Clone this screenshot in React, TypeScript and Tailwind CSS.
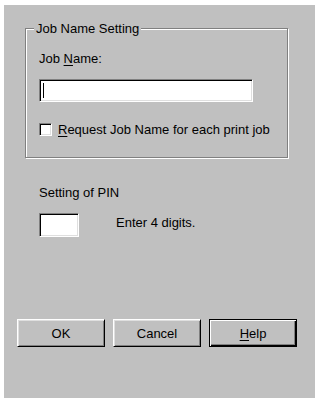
import React from 'react'

const font = { fontFamily: '"Liberation Sans", Arial, sans-serif' }

function Button({ label, underline, isDefault }: { label: string; underline?: number; isDefault?: boolean }) {
  const text =
    underline === undefined ? (
      label
    ) : (
      <>
        {label.slice(0, underline)}
        <u className="underline underline-offset-2">{label[underline]}</u>
        {label.slice(underline + 1)}
      </>
    )
  return (
    <button
      className={
        isDefault
          ? 'w-[88px] h-[28px] bg-[#c0c0c0] border border-black shadow-[inset_1px_1px_0_#fff,inset_-1px_-1px_0_#000,inset_-2px_-2px_0_#808080] text-[13px] text-black'
          : 'w-[88px] h-[28px] bg-[#c0c0c0] border border-t-white border-l-white border-b-black border-r-black shadow-[inset_1px_1px_0_#dfdfdf,inset_-1px_-1px_0_#808080] text-[13px] text-black'
      }
    >
      {text}
    </button>
  )
}

export default function App() {
  return (
    <div className="w-[318px] h-[398px] bg-white pl-[4px] pt-[5px] pr-[3px] flex" style={font}>
      <div className="flex-1 bg-[#c0c0c0] flex flex-col text-[13px] leading-[15px] text-black">
        {/* Job Name Setting group */}
        <div className="relative mt-[23px] ml-[21px] w-[263px] h-[130px] border border-[#808080] shadow-[inset_1px_1px_0_#fff,1px_1px_0_#fff] pl-[13px] pt-[22px]">
          <span className="absolute left-[8px] top-[-8px] bg-[#c0c0c0] px-[2px]">Job Name Setting</span>
          <div>
            Job <u className="underline underline-offset-2">N</u>ame:
          </div>
          <div className="mt-[13px] w-[214px] h-[23px] bg-white border border-t-[#808080] border-l-[#808080] border-b-white border-r-white shadow-[inset_1px_1px_0_#000,inset_-1px_-1px_0_#dfdfdf] pl-[3px] pt-[3px]">
            <div className="w-px h-[15px] bg-black" />
          </div>
          <label className="mt-[20px] flex items-center gap-[6px]">
            <span className="w-[13px] h-[13px] bg-white border border-t-[#808080] border-l-[#808080] border-b-white border-r-white shadow-[inset_1px_1px_0_#000,inset_-1px_-1px_0_#dfdfdf]" />
            <span>
              <u className="underline underline-offset-2">R</u>equest Job Name for each print job
            </span>
          </label>
        </div>

        {/* PIN */}
        <div className="mt-[27px] ml-[35px]">Setting of PIN</div>
        <div className="mt-[13px] ml-[35px] flex items-start gap-[37px]">
          <div className="w-[40px] h-[24px] bg-white border border-t-[#808080] border-l-[#808080] border-b-white border-r-white shadow-[inset_1px_1px_0_#000,inset_-1px_-1px_0_#dfdfdf]" />
          <span className="pt-[2px]">Enter 4 digits.</span>
        </div>

        {/* Buttons */}
        <div className="mt-[82px] ml-[13px] flex gap-[8px]">
          <Button label="OK" />
          <Button label="Cancel" />
          <Button label="Help" underline={0} isDefault />
        </div>
      </div>
    </div>
  )
}
